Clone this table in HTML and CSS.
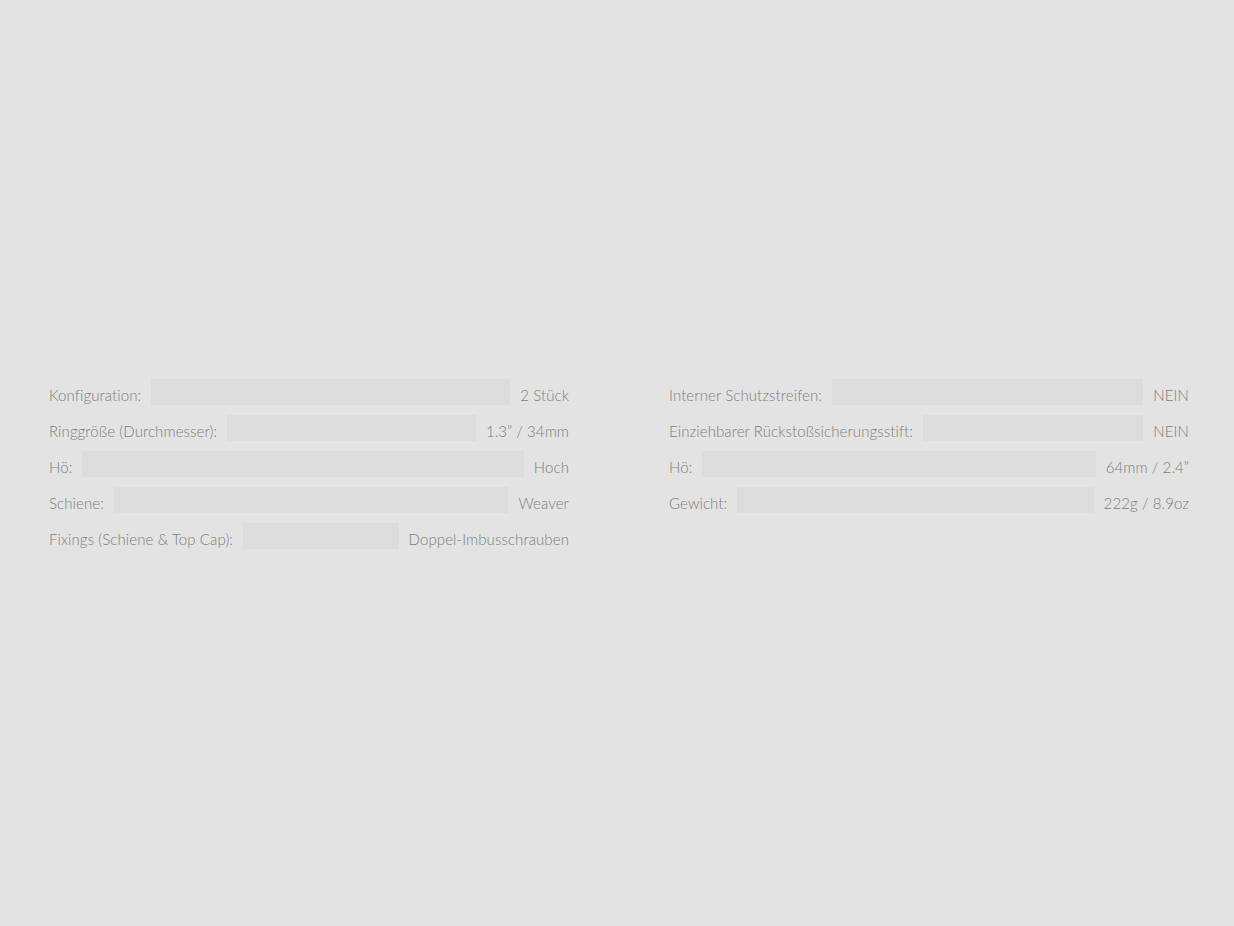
FILE: index.html
```html
<!DOCTYPE html>
<html lang="de">
<head>
<meta charset="UTF-8">
<meta name="viewport" content="width=device-width, initial-scale=1.0">
<title>Technische Daten</title>
<link rel="stylesheet" href="styles.css">
</head>
<body>
  <div class="specs">
    <div class="spec-col">
      <div class="spec-row"><span class="label">Konfiguration:</span><span class="fill"></span><span class="value">2 Stück</span></div>
      <div class="spec-row"><span class="label">Ringgröße (Durchmesser):</span><span class="fill"></span><span class="value">1.3” / 34mm</span></div>
      <div class="spec-row"><span class="label">Hö:</span><span class="fill"></span><span class="value">Hoch</span></div>
      <div class="spec-row"><span class="label">Schiene:</span><span class="fill"></span><span class="value">Weaver</span></div>
      <div class="spec-row"><span class="label">Fixings (Schiene &amp; Top Cap):</span><span class="fill"></span><span class="value">Doppel-Imbusschrauben</span></div>
    </div>
    <div class="spec-col">
      <div class="spec-row"><span class="label">Interner Schutzstreifen:</span><span class="fill"></span><span class="value">NEIN</span></div>
      <div class="spec-row"><span class="label">Einziehbarer Rückstoßsicherungsstift:</span><span class="fill"></span><span class="value">NEIN</span></div>
      <div class="spec-row"><span class="label">Hö:</span><span class="fill"></span><span class="value">64mm / 2.4”</span></div>
      <div class="spec-row"><span class="label">Gewicht:</span><span class="fill"></span><span class="value">222g / 8.9oz</span></div>
    </div>
  </div>
</body>
</html>
```

FILE: styles.css
```css
html { background: #e4e4e4; }
body {
  margin: 0;
  min-height: 926px;
  display: flex;
  align-items: center;
  font-family: Lato, "Open Sans", sans-serif;
  color: #7c7c7c;
}

.specs {
  flex: 1;
  display: flex;
  gap: 100px;
  padding: 28px 45px 28px 49px;
  background: #e3e3e3;
  margin-top: 2px;
}

.spec-col {
  flex: 1;
  display: flex;
  flex-direction: column;
  gap: 10px;
}

.spec-row {
  display: flex;
  align-items: flex-end;
  gap: 10px;
  height: 26px;
}

.label, .value {
  font-size: 15px;
  font-weight: 300;
  line-height: 18px;
  letter-spacing: 0.1px;
  white-space: nowrap;
  padding-bottom: 1px;
}

.fill {
  flex: 1;
  align-self: stretch;
  background: #dcdcdc;
}
```
